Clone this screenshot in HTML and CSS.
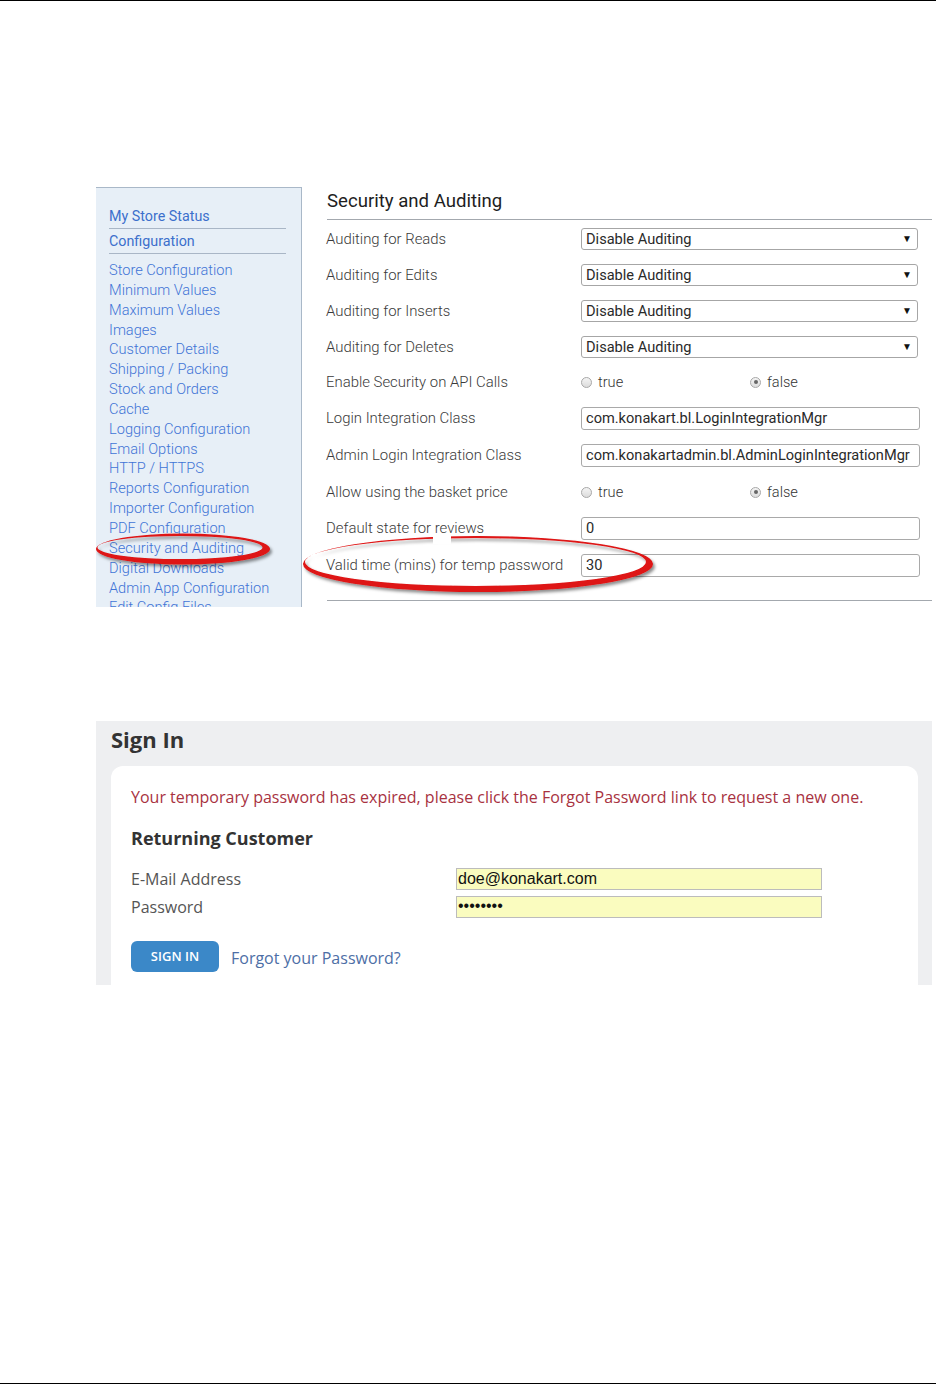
FILE: index.html
```html
<!DOCTYPE html>
<html>
<head>
<meta charset="utf-8">
<link rel="stylesheet" href="styles.css">
</head>
<body>
<div class="page">
  <div class="shot1">
    <aside class="sidebar">
      <div class="side-head">My Store Status</div>
      <div class="side-head">Configuration</div>
      <ul class="side-list">
        <li>Store Configuration</li>
        <li>Minimum Values</li>
        <li>Maximum Values</li>
        <li>Images</li>
        <li>Customer Details</li>
        <li>Shipping / Packing</li>
        <li>Stock and Orders</li>
        <li>Cache</li>
        <li>Logging Configuration</li>
        <li>Email Options</li>
        <li>HTTP / HTTPS</li>
        <li>Reports Configuration</li>
        <li>Importer Configuration</li>
        <li>PDF Configuration</li>
        <li>Security and Auditing</li>
        <li>Digital Downloads</li>
        <li>Admin App Configuration</li>
        <li>Edit Config Files</li>
      </ul>
    </aside>
    <main class="panel">
      <h1 class="panel-title">Security and Auditing</h1>
      <div class="rows">
        <div class="row"><span class="label">Auditing for Reads</span><div class="select">Disable Auditing<span class="arrow">▼</span></div></div>
        <div class="row"><span class="label">Auditing for Edits</span><div class="select">Disable Auditing<span class="arrow">▼</span></div></div>
        <div class="row"><span class="label">Auditing for Inserts</span><div class="select">Disable Auditing<span class="arrow">▼</span></div></div>
        <div class="row short"><span class="label">Auditing for Deletes</span><div class="select">Disable Auditing<span class="arrow">▼</span></div></div>
        <div class="row"><span class="label">Enable Security on API Calls</span>
          <div class="radios"><span class="radio-item"><span class="radio"></span>true</span><span class="radio-item"><span class="radio checked"></span>false</span></div></div>
        <div class="row"><span class="label">Login Integration Class</span><div class="input">com.konakart.bl.LoginIntegrationMgr</div></div>
        <div class="row tall"><span class="label">Admin Login Integration Class</span><div class="input">com.konakartadmin.bl.AdminLoginIntegrationMgr</div></div>
        <div class="row"><span class="label">Allow using the basket price</span>
          <div class="radios"><span class="radio-item"><span class="radio"></span>true</span><span class="radio-item"><span class="radio checked"></span>false</span></div></div>
        <div class="row"><span class="label">Default state for reviews</span><div class="input">0</div></div>
        <div class="row tall"><span class="label">Valid time (mins) for temp password</span><div class="input">30</div></div>
      </div>
      <div class="panel-rule"></div>
    </main>
  </div>

  <div class="shot2">
    <h2 class="signin-title">Sign In</h2>
    <div class="card">
      <p class="msg">Your temporary password has expired, please click the Forgot Password link to request a new one.</p>
      <h3 class="card-title">Returning Customer</h3>
      <div class="frow"><span class="flabel">E-Mail Address</span><div class="finput">doe@konakart.com</div></div>
      <div class="frow"><span class="flabel">Password</span><div class="finput pw">••••••••</div></div>
      <div class="actions"><span class="btn">SIGN IN</span><span class="forgot">Forgot your Password?</span></div>
    </div>
  </div>

  <svg class="marks" width="936" height="1384" viewBox="0 0 936 1384">
    <defs>
      <filter id="sh" x="-10%" y="-30%" width="120%" height="160%">
        <feDropShadow dx="2" dy="2.5" stdDeviation="1.6" flood-color="#000" flood-opacity="0.45"/>
      </filter>
      <mask id="gap">
        <rect x="0" y="0" width="936" height="1384" fill="#fff"/>
        <rect x="433" y="528" width="18" height="16" fill="#000"/>
      </mask>
    </defs>
    <path filter="url(#sh)" fill="#de1212" fill-rule="evenodd"
      d="M96 549 a87 15.5 0 1 0 174 0 a87 15.5 0 1 0 -174 0 Z M97.5 547.5 a82.5 11.5 0 1 0 165 0 a82.5 11.5 0 1 0 -165 0 Z"/>
    <g mask="url(#gap)">
      <path filter="url(#sh)" fill="#de1212" fill-rule="evenodd"
        d="M303 564 a175 28 0 1 0 350 0 a175 28 0 1 0 -350 0 Z M305 562 a170.5 24 0 1 0 341 0 a170.5 24 0 1 0 -341 0 Z"/>
    </g>
  </svg>
</div>
</body>
</html>
```

FILE: styles.css
```css
html, body {
  margin: 0;
  padding: 0;
  background: #fff;
}

.page {
  position: relative;
  width: 936px;
  height: 1384px;
  box-sizing: border-box;
  border-top: 1px solid #000;
  border-bottom: 1px solid #000;
  overflow: hidden;
}

/* ---------- first screenshot ---------- */
.shot1 {
  display: flex;
  margin: 186px 0 0 96px;
  width: 840px;
  height: 420px;
  font-family: Roboto, "Liberation Sans", sans-serif;
}

.sidebar {
  flex: none;
  box-sizing: content-box;
  background: #e7eff7;
  border-top: 1px solid #a9b8c8;
  border-right: 1px solid #a9b8c8;
  padding: 18px 0 0 13px;
  width: 192px;
  overflow: hidden;
}

.side-head {
  width: 177px;
  font-size: 14.3px;
  line-height: 20px;
  color: #3c6fcc;
  padding: 2px 0 2px;
  border-bottom: 1px solid #a9b6c6;
}
.side-head:first-child {
  padding-top: 0;
}

.side-list {
  list-style: none;
  margin: 7px 0 0;
  padding: 0;
}
.side-list li {
  font-size: 14.6px;
  font-weight: 300;
  line-height: 19.85px;
  color: #3f74d6;
  white-space: nowrap;
}

.panel {
  flex: 1;
  padding: 2px 4px 0 25px;
}

.panel-title {
  margin: 0;
  font-size: 18.6px;
  font-weight: 400;
  line-height: 24px;
  color: #1e1e1e;
  padding-bottom: 6px;
  border-bottom: 1px solid #a3a8ae;
}

.rows {
  padding-top: 1px;
}

.row {
  display: flex;
  align-items: center;
  height: 36px;
}
.row.short { height: 35px; }
.row.tall { height: 38px; }

.label {
  width: 254px;
  flex: none;
  margin-left: -1px;
  padding-right: 1px;
  font-size: 14.9px;
  font-weight: 300;
  color: #3a3a3a;
  white-space: nowrap;
}

.select {
  position: relative;
  width: 337px;
  height: 22px;
  box-sizing: border-box;
  border: 1px solid #a6a6a6;
  border-radius: 3px;
  background: #fff;
  padding-left: 4px;
  font-size: 14.6px;
  line-height: 20px;
  color: #2a2a2a;
}
.select .arrow {
  position: absolute;
  right: 5px;
  top: 0;
  font-size: 10px;
  line-height: 19px;
  color: #111;
}

.input {
  width: 339px;
  height: 23px;
  box-sizing: border-box;
  border: 1px solid #a9a9a9;
  border-radius: 3px;
  padding-left: 4px;
  font-size: 14.6px;
  line-height: 21px;
  color: #2a2a2a;
  white-space: nowrap;
  overflow: hidden;
}

.radios {
  display: flex;
}
.radio-item {
  display: flex;
  align-items: center;
  width: 169px;
  font-size: 14.6px;
  font-weight: 300;
  color: #333;
}
.radio {
  width: 11px;
  height: 11px;
  box-sizing: border-box;
  border: 1px solid #a8a8a8;
  border-radius: 50%;
  background: linear-gradient(#f4f4f4, #dcdcdc);
  margin-right: 6px;
  position: relative;
}
.radio.checked::after {
  content: "";
  position: absolute;
  left: 2.5px;
  top: 2.5px;
  width: 4px;
  height: 4px;
  border-radius: 50%;
  background: #666;
}

.panel-rule {
  margin-top: 16px;
  border-top: 1px solid #a3a8ae;
}

/* ---------- second screenshot ---------- */
.shot2 {
  margin: 114px 0 0 96px;
  width: 836px;
  height: 264px;
  box-sizing: border-box;
  background: #eeeff1;
  padding: 3px 14px 0 15px;
  overflow: hidden;
  font-family: "Open Sans", "Liberation Sans", sans-serif;
}

.signin-title {
  margin: 0;
  font-size: 22px;
  font-weight: 700;
  line-height: 30px;
  color: #333;
}

.card {
  margin-top: 12px;
  background: #fff;
  border-radius: 12px 12px 0 0;
  padding: 20px 20px 0;
  height: 260px;
}

.msg {
  margin: 0;
  font-size: 16px;
  line-height: 22px;
  color: #a8323f;
  white-space: nowrap;
}

.card-title {
  margin: 17px 0 0;
  font-size: 18px;
  font-weight: 700;
  line-height: 26px;
  color: #333;
}

.frow {
  display: flex;
  align-items: center;
  height: 22px;
  margin-top: 6px;
}
.frow:first-of-type {
  margin-top: 17px;
}
.flabel {
  width: 325px;
  flex: none;
  font-size: 16px;
  color: #555;
}
.finput {
  width: 366px;
  height: 22px;
  box-sizing: border-box;
  border: 1px solid #bcbcbc;
  background: #fafcbf;
  padding-left: 1px;
  font-family: "Liberation Sans", Arial, sans-serif;
  font-size: 16px;
  line-height: 20px;
  color: #111;
}
.finput.pw {
  font-size: 16px;
  line-height: 18px;
}

.actions {
  display: flex;
  align-items: baseline;
  margin-top: 23px;
}
.btn {
  display: inline-block;
  width: 88px;
  height: 31px;
  box-sizing: border-box;
  background: #3b88c8;
  border-radius: 6px;
  color: #fff;
  font-size: 13px;
  font-weight: 600;
  line-height: 31px;
  text-align: center;
}
.forgot {
  margin-left: 12px;
  font-size: 16px;
  color: #4d6ea6;
  position: relative;
  top: 3px;
}

/* ---------- annotation marks ---------- */
.marks {
  position: absolute;
  left: 0;
  top: -1px;
  pointer-events: none;
}
```
